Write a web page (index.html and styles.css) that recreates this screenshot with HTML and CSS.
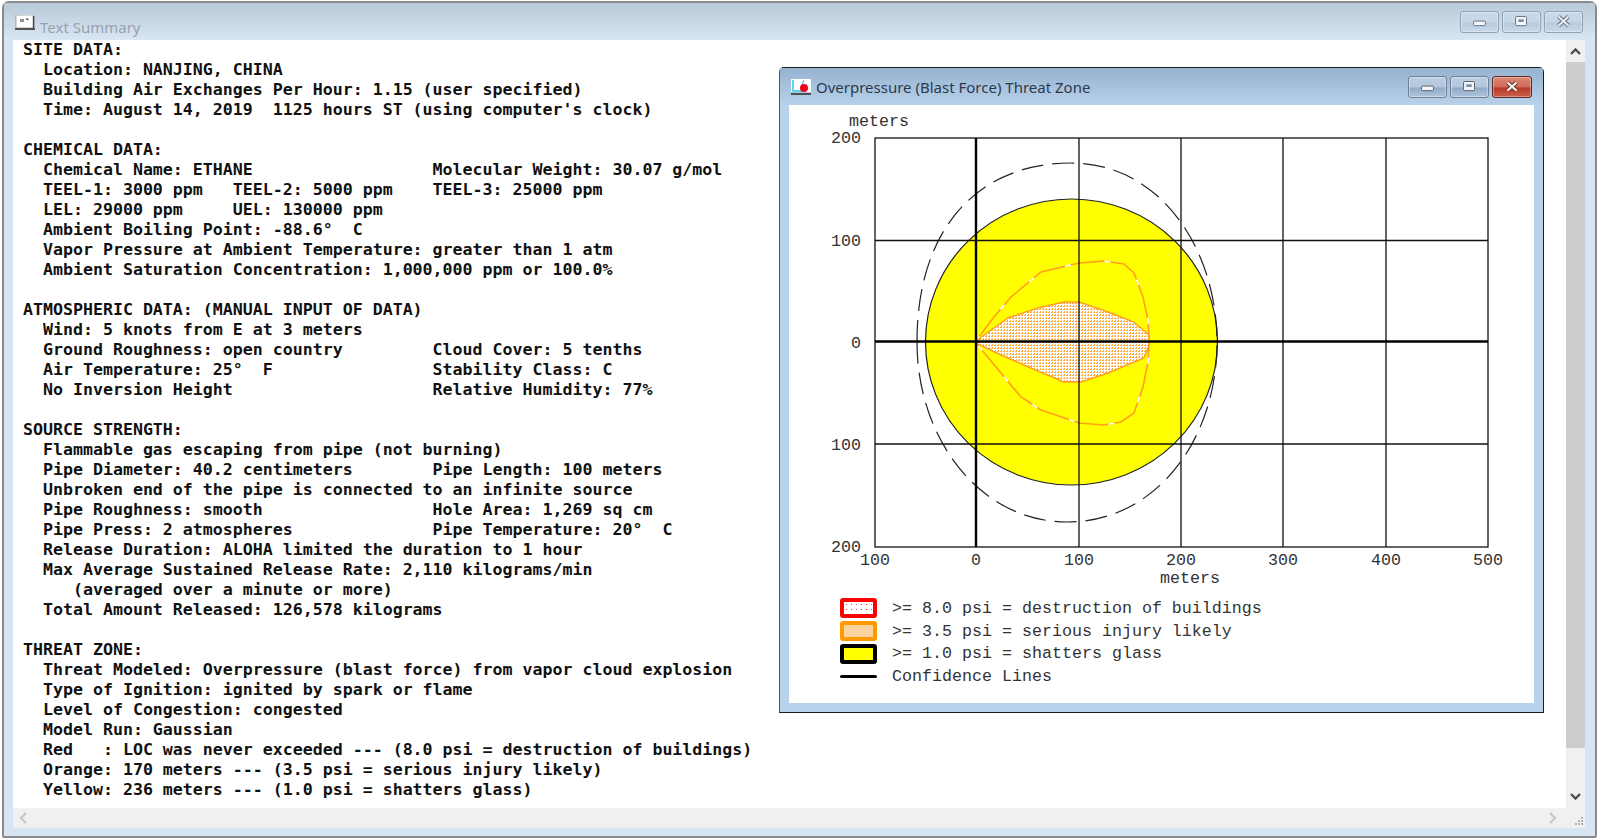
FILE: index.html
```html
<!DOCTYPE html>
<html lang="en">
<head>
    <meta charset="UTF-8">
    <title>Text Summary</title>
    <link rel="stylesheet" href="styles.css">
</head>
<body>
    <div class="window" id="summaryWindow">
        <div class="titlebar">
            <svg class="app-icon" viewBox="0 0 20 15">
                <rect x="1" y="0" width="18" height="13" fill="#fff" stroke="#777" stroke-width="0.6"/>
                <path d="M6 4v3M8 4v3M11 4h2v1" stroke="#222" stroke-width="1" fill="none"/>
                <path d="M0 14h20" stroke="#333" stroke-width="1.6"/>
                <path d="M18.5 1v12" stroke="#444" stroke-width="1.4"/>
            </svg>
            <span class="title title-inactive">Text Summary</span>
            <div class="caption-buttons">
                <div class="cap-btn">
                    <svg viewBox="0 0 39 22"><rect x="13" y="10" width="13" height="5" rx="1" fill="#f4f6f9" stroke="#5d6a7a"/></svg>
                </div>
                <div class="cap-btn">
                    <svg viewBox="0 0 39 22"><rect x="13" y="5" width="12" height="10" rx="1" fill="#f4f6f9" stroke="#5d6a7a"/><rect x="16" y="8" width="6" height="3" fill="#7f8fa3"/></svg>
                </div>
                <div class="cap-btn">
                    <svg viewBox="0 0 39 22"><path d="M14 5l11 10M25 5L14 15" stroke="#6d7885" stroke-width="4.5"/><path d="M14 5l11 10M25 5L14 15" stroke="#e9edf2" stroke-width="2.2"/></svg>
                </div>
            </div>
        </div>
        <div class="client">
            <div class="client-top">
<pre class="summary">SITE DATA:
  Location: NANJING, CHINA
  Building Air Exchanges Per Hour: 1.15 (user specified)
  Time: August 14, 2019  1125 hours ST (using computer's clock)

CHEMICAL DATA:
  Chemical Name: ETHANE                  Molecular Weight: 30.07 g/mol
  TEEL-1: 3000 ppm   TEEL-2: 5000 ppm    TEEL-3: 25000 ppm
  LEL: 29000 ppm     UEL: 130000 ppm
  Ambient Boiling Point: -88.6°  C
  Vapor Pressure at Ambient Temperature: greater than 1 atm
  Ambient Saturation Concentration: 1,000,000 ppm or 100.0%

ATMOSPHERIC DATA: (MANUAL INPUT OF DATA)
  Wind: 5 knots from E at 3 meters
  Ground Roughness: open country         Cloud Cover: 5 tenths
  Air Temperature: 25°  F                Stability Class: C
  No Inversion Height                    Relative Humidity: 77%

SOURCE STRENGTH:
  Flammable gas escaping from pipe (not burning)
  Pipe Diameter: 40.2 centimeters        Pipe Length: 100 meters
  Unbroken end of the pipe is connected to an infinite source
  Pipe Roughness: smooth                 Hole Area: 1,269 sq cm
  Pipe Press: 2 atmospheres              Pipe Temperature: 20°  C
  Release Duration: ALOHA limited the duration to 1 hour
  Max Average Sustained Release Rate: 2,110 kilograms/min
     (averaged over a minute or more)
  Total Amount Released: 126,578 kilograms

THREAT ZONE:
  Threat Modeled: Overpressure (blast force) from vapor cloud explosion
  Type of Ignition: ignited by spark or flame
  Level of Congestion: congested
  Model Run: Gaussian
  Red   : LOC was never exceeded --- (8.0 psi = destruction of buildings)
  Orange: 170 meters --- (3.5 psi = serious injury likely)
  Yellow: 236 meters --- (1.0 psi = shatters glass)</pre>
                <div class="vscroll">
                    <svg class="arrow" viewBox="0 0 19 22"><path d="M5 14l4.500-4.500 4.500 4.500" class="chevron"/></svg>
                    <div class="thumb"></div>
                    <svg class="arrow arrow-down" viewBox="0 0 19 22"><path d="M5 8l4.500 4.500 4.500-4.500" class="chevron"/></svg>
                </div>
            </div>
            <div class="hscroll">
                <svg class="h-arrow" viewBox="0 0 20 20"><path d="M13 5l-5 5 5 5" class="chevron chevron-light"/></svg>
                <svg class="h-arrow" viewBox="0 0 20 20"><path d="M7 5l5 5-5 5" class="chevron chevron-light"/></svg>
                <div class="grip"><i></i><i></i><i></i><i></i><i></i><i></i></div>
            </div>
        </div>
    </div>

    <!-- threat zone window sits on top of the summary -->
    <div class="window-inner" id="threatWindow">
        <div class="titlebar-inner">
            <svg class="app-icon-inner" viewBox="0 0 20 16">
                <rect x="0" y="0" width="20" height="13" fill="#fff"/>
                <path d="M2 1v11h9" stroke="#18c8e0" stroke-width="1.4" fill="none"/>
                <path d="M13 1l-2 5" stroke="#18c8e0" stroke-width="1"/>
                <circle cx="13" cy="9" r="4" fill="#f00018"/>
                <path d="M0 15h20" stroke="#333" stroke-width="1.6"/>
            </svg>
            <span class="title">Overpressure (Blast Force) Threat Zone</span>
            <div class="caption-buttons caption-buttons-inner">
                <div class="cap-btn cap-btn-active">
                    <svg viewBox="0 0 39 22"><rect x="13" y="10" width="13" height="5" rx="1" fill="#f4f6f9" stroke="#4c5766"/></svg>
                </div>
                <div class="cap-btn cap-btn-active">
                    <svg viewBox="0 0 39 22"><rect x="13" y="5" width="12" height="10" rx="1" fill="#f4f6f9" stroke="#4c5766"/><rect x="16" y="8" width="6" height="3" fill="#7f8fa3"/></svg>
                </div>
                <div class="cap-btn cap-btn-close">
                    <svg viewBox="0 0 40 22"><path d="M15 6l10 9M25 6L15 15" stroke="#6b2a20" stroke-width="4.500"/><path d="M15 6l10 9M25 6L15 15" stroke="#f4f4f4" stroke-width="2.400"/></svg>
                </div>
            </div>
        </div>
        <div class="plot-area">
            <!-- viewBox uses screen pixels, so plot coords read straight off the screen -->
            <svg class="plot" viewBox="788 105 746 492">
                <defs>
                    <pattern id="dots" width="3" height="3" patternUnits="userSpaceOnUse">
                        <rect width="3" height="3" fill="#fff"/>
                        <rect x="0" y="0" width="2" height="1" fill="#ffa93a"/>
                        <rect x="1" y="2" width="1" height="1" fill="#ffa93a"/>
                    </pattern>
                </defs>

                <ellipse cx="1070.500" cy="342" rx="146" ry="143" fill="#ff0" stroke="#222" stroke-width="1.200"/>
                <path class="contour" d="M975 341L993 317 1010 297 1040 272 1078 263 1103 261 1123 264 1133 273 1142 297 1147 320 1148 341 1147 362 1142 387 1133 413 1120 422 1103 425 1078 423 1040 410 1020 397 1000 373 975 343"/>
                <path class="contour contour-gaps" d="M975 341L993 317 1010 297 1040 272 1078 263 1103 261 1123 264 1133 273 1142 297 1147 320 1148 341 1147 362 1142 387 1133 413 1120 422 1103 425 1078 423 1040 410 1020 397 1000 373 975 343"/>
                <path class="lobe" d="M975 341L1007 318 1037 308 1063 302 1078 302 1107 312 1133 322 1148 335 1148 345 1143 358 1107 373 1080 382 1063 382 1030 368 1000 355 975 343Z"/>
                <path class="confidence" d="M916 342C916 225 980 163 1070 163C1160 163 1216 250 1216 342C1216 440 1155 522 1066 522C980 522 916 440 916 342Z"/>

                <g class="grid">
                    <rect x="874" y="138" width="613" height="409"/>
                    <path d="M1078 138V547M1180 138V547M1282 138V547M1385 138V547"/>
                    <path d="M874 240.500H1487M874 444H1487"/>
                </g>
                <path class="axis" d="M975 138V547M874 341.500H1487"/>

                <text class="plot-text" x="848" y="126">meters</text>
                <text class="plot-text tick-y" x="860" y="143">200</text>
                <text class="plot-text tick-y" x="860" y="246">100</text>
                <text class="plot-text tick-y" x="860" y="348">0</text>
                <text class="plot-text tick-y" x="860" y="450">100</text>
                <text class="plot-text tick-y" x="860" y="552">200</text>
                <text class="plot-text tick-x" x="874" y="565">100</text>
                <text class="plot-text tick-x" x="975" y="565">0</text>
                <text class="plot-text tick-x" x="1078" y="565">100</text>
                <text class="plot-text tick-x" x="1180" y="565">200</text>
                <text class="plot-text tick-x" x="1282" y="565">300</text>
                <text class="plot-text tick-x" x="1385" y="565">400</text>
                <text class="plot-text tick-x" x="1487" y="565">500</text>
                <text class="plot-text tick-x" x="1189" y="583">meters</text>
            </svg>
            <div class="legend">
                <div class="legend-row"><span class="swatch swatch-red"></span><span>&gt;= 8.0 psi = destruction of buildings</span></div>
                <div class="legend-row"><span class="swatch swatch-orange"></span><span>&gt;= 3.5 psi = serious injury likely</span></div>
                <div class="legend-row"><span class="swatch swatch-yellow"></span><span>&gt;= 1.0 psi = shatters glass</span></div>
                <div class="legend-row"><span class="swatch swatch-line"></span><span>Confidence Lines</span></div>
            </div>
        </div>
    </div>
</body>
</html>
```

FILE: styles.css
```css
* {
    box-sizing: border-box;
}

html, body {
    height: 100%;
}

body {
    margin: 0;
    padding: 1px 3px 1px 2px;
    background: #fff;
    overflow: hidden;
    font-family: "Liberation Mono", monospace;
}

/* Outer window */
.window {
    display: flex;
    flex-direction: column;
    height: 100%;
    padding: 0 10px 8px 9px;
    border: 2px solid #8a8a8a;
    border-radius: 7px 7px 2px 2px;
    background: #d7e4f2;
}

.titlebar {
    display: flex;
    align-items: center;
    flex: none;
    height: 37px;
    margin: 0 -10px 0 -9px;
    padding: 10px 0 0 11px;
    background: linear-gradient(#b9c9d8, #d9e6f4);
}

.app-icon {
    width: 20px;
    height: 15px;
    margin-right: 5px;
    margin-top: -8px;
}

.title {
    font-family: "Noto Sans", sans-serif;
    font-size: 15px;
    color: #2b3a4e;
}

.title-inactive {
    color: #98a3ae;
}

.caption-buttons {
    display: flex;
    gap: 3px;
    margin-left: auto;
    margin-top: -9px;
    margin-right: 12px;
}

.cap-btn {
    width: 39px;
    height: 22px;
    border: 1px solid #8ea2ba;
    border-radius: 3px;
    background: linear-gradient(#cbd9e8, #c5d5e6 50%, #b7cade 55%, #c9d9ea);
    box-shadow: inset 0 0 0 1px rgba(255, 255, 255, 0.35);
}

.cap-btn svg {
    display: block;
    width: 100%;
    height: 100%;
}

.client {
    display: flex;
    flex-direction: column;
    flex: 1;
    min-height: 0;
}

.client-top {
    display: flex;
    flex: 1;
    min-height: 0;
    background: #fff;
}

.summary {
    flex: 1;
    margin: 0;
    padding-left: 10px;
    font-family: "DejaVu Sans Mono", monospace;
    font-size: 16.6px;
    font-weight: bold;
    line-height: 20px;
    color: #111;
    overflow: hidden;
}

/* Scroll bars */
.vscroll {
    display: flex;
    flex-direction: column;
    flex: none;
    width: 19px;
    background: #f0f0f0;
}

.arrow {
    flex: none;
    width: 19px;
    height: 22px;
}

.arrow-down {
    margin-top: 38px;
}

.thumb {
    flex: 1;
    background: #cdcdcd;
}

.chevron {
    fill: none;
    stroke: #505050;
    stroke-width: 2.400;
}

.chevron-light {
    stroke: #c8c8c8;
}

.hscroll {
    display: flex;
    align-items: center;
    justify-content: space-between;
    flex: none;
    height: 20px;
    padding: 0 0 0 0;
    background: #f0f0f0;
}

.h-arrow {
    width: 20px;
    height: 20px;
}

.h-arrow:nth-child(2) {
    margin-left: auto;
    margin-right: 12px;
}

.grip {
    display: grid;
    grid-template-columns: repeat(3, 2px);
    grid-auto-rows: 2px;
    gap: 1px;
    width: 8px;
    margin: 6px 2px 0 0;
    direction: rtl;
}

.grip i {
    background: #b4b4b4;
}

.grip i:nth-child(1) {
    grid-column: 1;
    grid-row: 1;
}

.grip i:nth-child(2) {
    grid-column: 1;
    grid-row: 2;
}

.grip i:nth-child(3) {
    grid-column: 2;
    grid-row: 2;
}

.grip i:nth-child(4) {
    grid-column: 1;
    grid-row: 3;
}

.grip i:nth-child(5) {
    grid-column: 2;
    grid-row: 3;
}

.grip i:nth-child(6) {
    grid-column: 3;
    grid-row: 3;
}

/* Threat zone window, floats over the text */
.window-inner {
    position: absolute;
    left: 779px;
    top: 67px;
    width: 765px;
    height: 646px;
    display: flex;
    flex-direction: column;
    padding: 0 9px 9px 9px;
    border: 1px solid #1c1c1c;
    border-left-color: #45586c;
    border-radius: 5px 5px 0 0;
    background: #b9d2ec;
}

.titlebar-inner {
    display: flex;
    align-items: center;
    flex: none;
    height: 37px;
    margin: 0 -9px;
    padding: 0 0 0 11px;
    background: linear-gradient(#96b2cf, #b8d1ea);
}

.app-icon-inner {
    width: 20px;
    height: 16px;
    margin-right: 5px;
}

.caption-buttons-inner {
    margin-top: 0;
    margin-right: 11px;
}

.cap-btn-active {
    border-color: #6f8199;
    background: linear-gradient(#bccde0, #b3c7dc 50%, #90aac6 55%, #aec5dd);
}

.cap-btn-close {
    width: 40px;
    border-color: #5d2a28;
    background: linear-gradient(#dc8a78, #cf6a55 50%, #b93a26 55%, #c9604a);
}

.plot-area {
    flex: 1;
    background: #fff;
}

.plot {
    display: block;
    width: 746px;
    height: 492px;
}

.grid {
    fill: none;
    stroke: #111;
    stroke-width: 1.300;
}

.axis {
    fill: none;
    stroke: #000;
    stroke-width: 2.400;
}

.contour {
    fill: none;
    stroke: #ff9f1a;
    stroke-width: 1.600;
}

.contour-gaps {
    stroke: #fff;
    stroke-dasharray: 6 34;
}

.lobe {
    fill: url(#dots);
    stroke: #ff9f1a;
    stroke-width: 1.400;
}

.confidence {
    fill: none;
    stroke: #222;
    stroke-width: 1.200;
    stroke-dasharray: 22 9;
}

.plot-text {
    font-family: "Liberation Mono", monospace;
    font-size: 16.67px;
    fill: #333;
}

.tick-y {
    text-anchor: end;
}

.tick-x {
    text-anchor: middle;
}

.legend {
    display: flex;
    flex-direction: column;
    padding-left: 51px;
    font-size: 16.67px;
    color: #333;
}

.legend-row {
    display: flex;
    align-items: center;
    gap: 15px;
    height: 22.700px;
}

.swatch {
    flex: none;
    width: 37px;
    height: 20px;
    border: 4px solid;
    border-radius: 3px;
}

.swatch-red {
    border-color: #f00;
    background: radial-gradient(circle, #f33 0.6px, #fff 1px) 0 0 / 5px 5px;
}

.swatch-orange {
    border-color: #ff9a00;
    background: #fbd3a0;
}

.swatch-yellow {
    border-color: #000;
    background: #ff0;
}

.swatch-line {
    height: 3px;
    border: none;
    background: #000;
}
```
